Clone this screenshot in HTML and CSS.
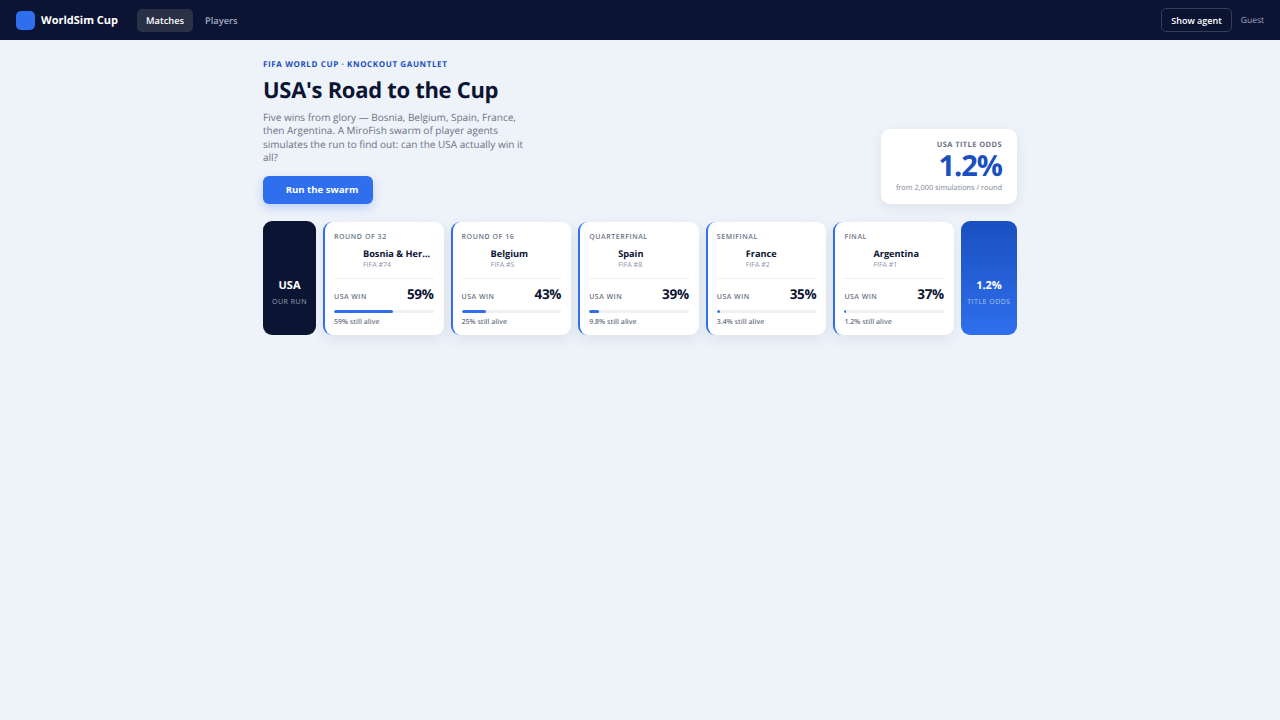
FILE: index.html
```html
<!DOCTYPE html>
<html lang="en">
<head>
  <meta charset="UTF-8">
  <title>WorldSim Cup</title>
  <link rel="stylesheet" href="styles.css">
</head>
<body>

<!-- Top nav -->
<header class="topbar">
  <div class="brand">
    <span class="brand-mark"></span>
    <span class="brand-name">WorldSim Cup</span>
  </div>
  <nav class="nav">
    <a class="nav-link active">Matches</a>
    <a class="nav-link">Players</a>
  </nav>
  <div class="topbar-right">
    <button class="agent-btn">Show agent</button>
    <span class="guest">Guest</span>
  </div>
</header>

<main class="page">
  <section class="hero">
    <div class="hero-text">
      <div class="eyebrow">FIFA WORLD CUP · KNOCKOUT GAUNTLET</div>
      <h1>USA's Road to the Cup</h1>
      <p class="lead">Five wins from glory — Bosnia, Belgium, Spain, France, then Argentina. A MiroFish swarm of player agents simulates the run to find out: can the USA actually win it all?</p>
      <button class="run-btn">Run the swarm</button>
    </div>
    <div class="odds-card">
      <div class="odds-label">USA TITLE ODDS</div>
      <div class="odds-value">1.2%</div>
      <div class="odds-note">from 2,000 simulations / round</div>
    </div>
  </section>

  <!-- Bracket strip -->
  <section class="road">
    <div class="cap cap-start">
      <div class="cap-title">USA</div>
      <div class="cap-sub">OUR RUN</div>
    </div>

    <div class="round">
      <div class="round-name">ROUND OF 32</div>
      <div class="opp">
        <div class="opp-name">Bosnia &amp; Herzegovina</div>
        <div class="opp-rank">FIFA #74</div>
      </div>
      <div class="win-row"><span class="win-label">USA WIN</span><span class="win-pct">59%</span></div>
      <div class="bar"><div class="bar-fill" style="width: 59%"></div></div>
      <div class="alive">59% still alive</div>
    </div>

    <div class="round">
      <div class="round-name">ROUND OF 16</div>
      <div class="opp">
        <div class="opp-name">Belgium</div>
        <div class="opp-rank">FIFA #5</div>
      </div>
      <div class="win-row"><span class="win-label">USA WIN</span><span class="win-pct">43%</span></div>
      <div class="bar"><div class="bar-fill" style="width: 25%"></div></div>
      <div class="alive">25% still alive</div>
    </div>

    <div class="round">
      <div class="round-name">QUARTERFINAL</div>
      <div class="opp">
        <div class="opp-name">Spain</div>
        <div class="opp-rank">FIFA #8</div>
      </div>
      <div class="win-row"><span class="win-label">USA WIN</span><span class="win-pct">39%</span></div>
      <div class="bar"><div class="bar-fill" style="width: 9.8%"></div></div>
      <div class="alive">9.8% still alive</div>
    </div>

    <div class="round">
      <div class="round-name">SEMIFINAL</div>
      <div class="opp">
        <div class="opp-name">France</div>
        <div class="opp-rank">FIFA #2</div>
      </div>
      <div class="win-row"><span class="win-label">USA WIN</span><span class="win-pct">35%</span></div>
      <div class="bar"><div class="bar-fill" style="width: 3.4%"></div></div>
      <div class="alive">3.4% still alive</div>
    </div>

    <div class="round">
      <div class="round-name">FINAL</div>
      <div class="opp">
        <div class="opp-name">Argentina</div>
        <div class="opp-rank">FIFA #1</div>
      </div>
      <div class="win-row"><span class="win-label">USA WIN</span><span class="win-pct">37%</span></div>
      <div class="bar"><div class="bar-fill" style="width: 1.2%"></div></div>
      <div class="alive">1.2% still alive</div>
    </div>

    <div class="cap cap-end">
      <div class="cap-title">1.2%</div>
      <div class="cap-sub">TITLE ODDS</div>
    </div>
  </section>
</main>

</body>
</html>
```

FILE: styles.css
```css
* { box-sizing: border-box; }
body {
  margin: 0;
  min-height: 720px;
  background: #eef2f9;
  color: #0b1433;
  font-family: "Open Sans", "Noto Sans", sans-serif;
  text-rendering: geometricPrecision;
}
button { font-family: inherit; cursor: pointer; }

/* top nav */
.topbar {
  display: flex;
  align-items: center;
  height: 40px;
  padding: 0 16px;
  background: #0b1433;
}
.brand { display: flex; align-items: center; gap: 6px; width: 121px; }
.brand-mark { width: 19px; height: 19px; border-radius: 5px; background: #2f6fed; }
.brand-name { color: #fff; font-size: 11px; font-weight: 700; white-space: nowrap; }
.nav { display: flex; gap: 3px; }
.nav-link {
  padding: 4px 9px;
  border-radius: 5px;
  color: #a3abc0;
  font-size: 9.3px;
  font-weight: 600;
  line-height: 15px;
}
.nav-link.active { background: #2a3146; color: #fff; }
.topbar-right { display: flex; align-items: center; gap: 9px; margin-left: auto; }
.agent-btn {
  height: 24px;
  padding: 0 9px;
  border: 1px solid #353c54;
  border-radius: 5px;
  background: transparent;
  color: #fff;
  font-size: 9px;
  font-weight: 600;
}
.guest { color: #a3abc0; font-size: 8.5px; }

/* hero */
.page { width: 754px; margin: 0 auto; padding-top: 19px; }
.hero { display: flex; justify-content: space-between; align-items: flex-end; }
.hero-text { width: 268px; }
.eyebrow {
  color: #1a4fbf;
  font-size: 8px;
  font-weight: 700;
  letter-spacing: 0.62px;
  line-height: 12px;
}
h1 {
  margin: 3px 0 4px;
  font-size: 22px;
  font-weight: 700;
  line-height: 33px;
  letter-spacing: -0.3px;
  white-space: nowrap;
}
.lead { margin: 0 0 11px; color: #6b7384; font-size: 10px; line-height: 13.4px; }
.run-btn {
  display: block;
  width: 110px;
  height: 28px;
  padding: 0 0 0 8px;
  border: none;
  border-radius: 6px;
  background: #2f6fed;
  box-shadow: 0 4px 10px rgba(47, 111, 237, 0.25);
  color: #fff;
  font-size: 9.6px;
  font-weight: 700;
}
.odds-card {
  width: 136px;
  height: 75px;
  padding: 11px 15px 0 10px;
  border-radius: 9px;
  background: #fff;
  box-shadow: 0 4px 14px rgba(11, 20, 51, 0.07);
  text-align: right;
}
.odds-label { color: #6b7384; font-size: 7.5px; font-weight: 700; letter-spacing: 0.4px; line-height: 11px; }
.odds-value { color: #1a4fbf; font-size: 29px; font-weight: 700; line-height: 30px; letter-spacing: -1px; }
.odds-note { margin-top: 2px; color: #7c8494; font-size: 7.35px; line-height: 11px; }

/* bracket strip */
.road {
  display: grid;
  grid-template-columns: 53px repeat(5, minmax(0, 1fr)) 56px;
  gap: 7px;
  margin-top: 17px;
}
.cap {
  display: flex;
  flex-direction: column;
  align-items: center;
  justify-content: center;
  height: 114px;
  padding-top: 30px;
  border-radius: 9px;
}
.cap-start { background: #0b1433; }
.cap-end { background: linear-gradient(180deg, #1a4fbf, #2f6fed); }
.cap-title { color: #fff; font-size: 11px; font-weight: 700; line-height: 16px; }
.cap-sub { margin-top: 3px; color: #9aa1b5; font-size: 7px; letter-spacing: 0.5px; line-height: 11px; }
.cap-end .cap-sub { color: #a9c2f5; }

.round {
  height: 113px;
  margin-top: 1px;
  padding: 11px 10px 0 9px;
  border-left: 2px solid #2f6fed;
  border-radius: 9px;
  background: #fff;
  box-shadow: 0 5px 16px rgba(11, 20, 51, 0.07);
}
.round-name { color: #6b7384; font-size: 7px; font-weight: 600; letter-spacing: 0.55px; line-height: 10px; }
.opp {
  height: 32px;
  margin-top: 4px;
  padding-left: 29px;
  border-bottom: 1px solid #eef0f4;
}
.opp-name {
  overflow: hidden;
  color: #0b1433;
  font-size: 9.2px;
  font-weight: 700;
  line-height: 14px;
  text-overflow: ellipsis;
  white-space: nowrap;
}
.opp-rank { color: #8d94a8; font-size: 7px; line-height: 10px; }
.win-row { display: flex; justify-content: space-between; align-items: baseline; height: 21px; margin-top: 6px; }
.win-label { color: #6b7384; font-size: 7px; font-weight: 600; letter-spacing: 0.45px; }
.win-pct { color: #0b1433; font-size: 13.5px; font-weight: 700; letter-spacing: -0.3px; }
.bar { height: 3px; margin-top: 4px; border-radius: 2px; background: #eef0f4; overflow: hidden; }
.bar-fill { height: 100%; border-radius: 2px; background: #2f6fed; }
.alive { margin-top: 4px; color: #6b7384; font-size: 7px; font-weight: 600; line-height: 11px; }
```
